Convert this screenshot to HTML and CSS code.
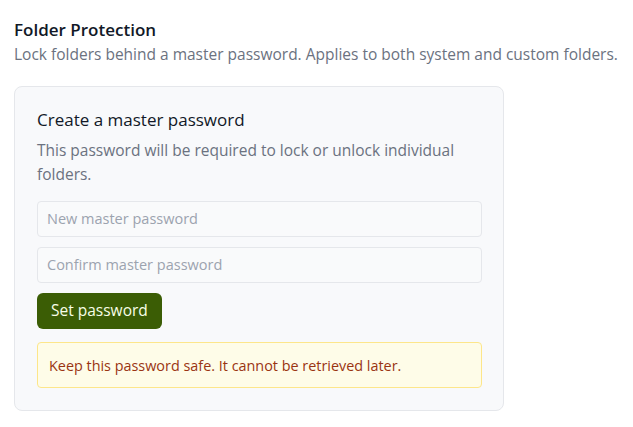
FILE: index.html
```html
<!DOCTYPE html>
<html lang="en">
<head>
<meta charset="utf-8">
<title>Folder Protection</title>
<link rel="stylesheet" href="styles.css">
</head>
<body>
<section class="page">
  <h2 class="title">Folder Protection</h2>
  <p class="subtitle">Lock folders behind a master password. Applies to both system and custom folders.</p>
  <div class="card">
    <h3 class="card-title">Create a master password</h3>
    <p class="card-desc">This password will be required to lock or unlock individual folders.</p>
    <form class="form">
      <input class="field" type="password" placeholder="New master password">
      <input class="field" type="password" placeholder="Confirm master password">
      <div class="actions"><button class="btn" type="button">Set password</button></div>
    </form>
    <div class="alert">Keep this password safe. It cannot be retrieved later.</div>
  </div>
</section>
</body>
</html>
```
FILE: styles.css
```css
* { box-sizing: border-box; }
html, body { margin: 0; background: #ffffff; }
body {
  font-family: "Open Sans", "Noto Sans", "DejaVu Sans", sans-serif;
  color: #111827;
}
.page { padding: 18px 14px; }
.title {
  margin: 0;
  font-size: 17px;
  line-height: 24px;
  font-weight: 600;
  color: #111827;
}
.subtitle {
  margin: 0;
  font-size: 15.5px;
  line-height: 24px;
  color: #6b7280;
}
.card {
  margin-top: 20px;
  width: 490px;
  background: #f8f9fb;
  border: 1px solid #e5e7eb;
  border-radius: 8px;
  padding: 21px 21px 22px 22px;
}
.card-title {
  margin: 0;
  font-size: 17px;
  line-height: 24px;
  font-weight: 500;
  color: #111827;
}
.card-desc {
  margin: 6px 0 0;
  font-size: 15.5px;
  line-height: 24px;
  color: #6b7280;
}
.form {
  margin-top: 15px;
  display: flex;
  flex-direction: column;
  gap: 10px;
}
.field {
  height: 36px;
  width: 100%;
  border: 1px solid #e5e7eb;
  border-radius: 4px;
  background: #f9fafb;
  padding: 0 9px 1px;
  font-family: inherit;
  font-size: 14.5px;
  color: #111827;
  outline: none;
}
.field::placeholder { color: #9ca3af; }
.actions { display: flex; }
.btn {
  height: 36px;
  padding: 0 14px 2px;
  border: 0;
  border-radius: 6px;
  background: #3b5d05;
  color: #f7fee7;
  font-family: inherit;
  font-size: 15.5px;
  cursor: pointer;
}
.alert {
  margin-top: 13px;
  height: 46px;
  display: flex;
  align-items: center;
  padding: 0 11px;
  background: #fefce8;
  border: 1px solid #fde68a;
  border-radius: 4px;
  color: #9a3412;
  font-size: 14.4px;
}
```
